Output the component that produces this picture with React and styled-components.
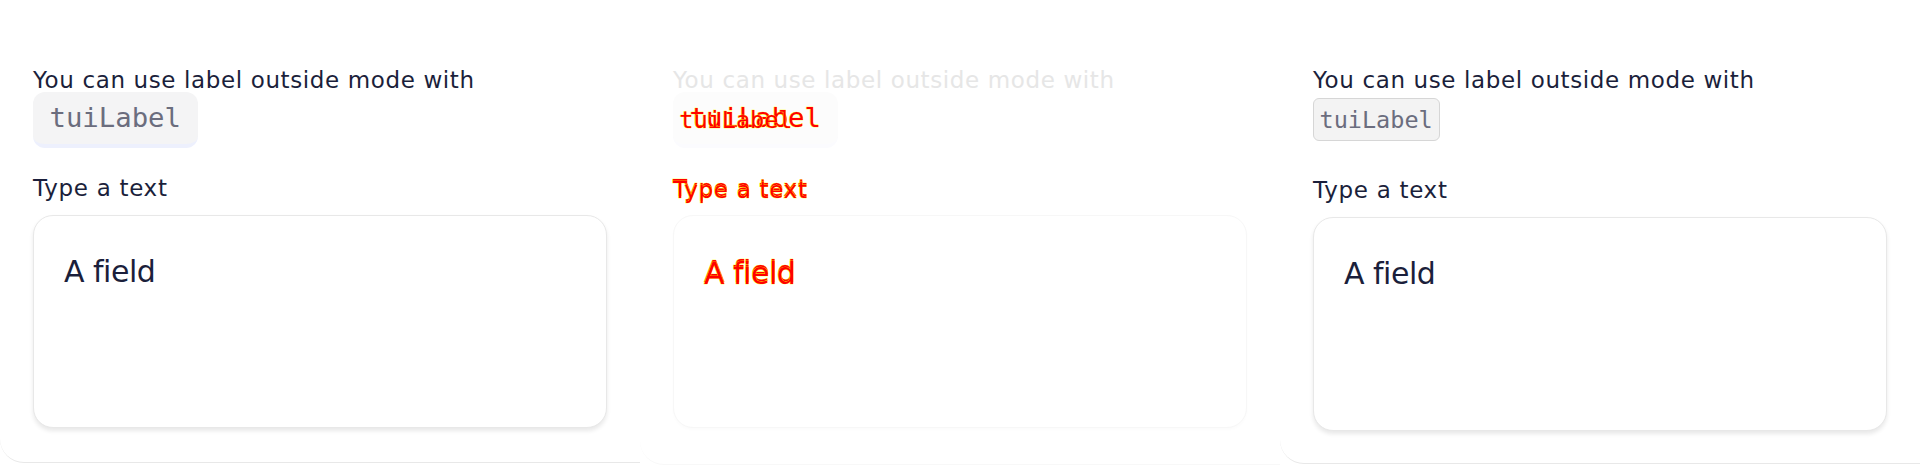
import React from "react";
import styled, { createGlobalStyle, css } from "styled-components";

const GlobalStyle = createGlobalStyle`
  html, body {
    margin: 0;
    padding: 0;
    background: #ffffff;
  }
  body {
    font-family: "DejaVu Sans", "Inter", sans-serif;
  }
`;

const INK = "#1b1f3b";
const FADED = "#e6e6e6";

const Board = styled.div`
  display: flex;
  align-items: flex-start;
  width: 1920px;
  height: 466px;
  overflow: hidden;
`;

const Panel = styled.section`
  box-sizing: border-box;
  width: 640px;
  height: ${(p) => p.$height}px;
  padding: 66px 33px 0 33px;
  display: flex;
  flex-direction: column;
  align-items: flex-start;
  background: #ffffff;
  border-bottom: 1px solid ${(p) => (p.$faded ? "#f8f8f8" : "#e8e8e8")};
  border-bottom-left-radius: 24px;
`;

const Hint = styled.div`
  font-size: 23px;
  line-height: 28px;
  letter-spacing: 0.62px;
  white-space: nowrap;
  color: ${(p) => (p.$faded ? FADED : INK)};
`;

// pixel diff look: red core, yellow anti-aliased rim
const diffInk = css`
  color: #ff0000;
  -webkit-text-stroke: 0.7px #ffff00;
  paint-order: stroke fill;
`;

const Code = styled.code`
  position: relative;
  box-sizing: border-box;
  display: inline-block;
  font-family: "DejaVu Sans Mono", "Liberation Mono", monospace;
  color: #6b6d7e;
  white-space: nowrap;
  ${(p) =>
    p.$look === "box"
      ? css`
          margin-top: 4px;
          height: 43px;
          padding: 7px 6px 6px 5.5px;
          font-size: 23.5px;
          line-height: 28px;
          background: #f3f3f3;
          border: 1px solid #d6d6d6;
          border-radius: 6px;
        `
      : css`
          margin-top: -2px;
          height: 56px;
          padding: 10px 17px 10px 16.5px;
          font-size: 27.3px;
          line-height: 32px;
          background: ${p.$faded ? "#fcfcfc" : "#f4f4f5"};
          border-bottom: 4px solid ${p.$faded ? "#fbfbfe" : "#edf0fd"};
          border-radius: 12px;
        `}
  ${(p) => p.$diff && diffInk}
`;

const CodeGhost = styled.span`
  position: absolute;
  left: 6.3px;
  top: 14px;
  font-size: 23.5px;
  line-height: 28px;
  ${diffInk}
`;

const Caption = styled.div`
  position: relative;
  margin-top: ${(p) => p.$gap}px;
  font-size: 23px;
  line-height: 28px;
  letter-spacing: 0.7px;
  color: ${INK};
  ${(p) => p.$diff && diffInk}
`;

const Ghost = styled.span`
  position: absolute;
  left: 0;
  top: ${(p) => p.$shift}px;
  white-space: nowrap;
  ${diffInk}
`;

const Field = styled.div`
  box-sizing: border-box;
  width: 574px;
  height: ${(p) => p.$height}px;
  margin-top: 13px;
  padding: 38px 30px;
  background: #ffffff;
  border: 1px solid ${(p) => (p.$faded ? "#f7f7f7" : "#e8e8e8")};
  border-radius: 20px;
  box-shadow: ${(p) =>
    p.$faded ? "0 2px 3px rgba(0, 0, 0, 0.015)" : "0 3px 4px rgba(0, 0, 0, 0.09)"};
  font-size: 30px;
  line-height: 36px;
  letter-spacing: -0.5px;
  color: ${INK};
`;

const Value = styled.span`
  position: relative;
  display: inline-block;
  white-space: nowrap;
  ${(p) => p.$diff && diffInk}
`;

const HINT = "You can use label outside mode with";

function ReferencePanel() {
  return (
    <Panel $height={463}>
      <Hint>{HINT}</Hint>
      <Code $look="pill">tuiLabel</Code>
      <Caption $gap={26}>Type a text</Caption>
      <Field $height={213}>
        <Value>A field</Value>
      </Field>
    </Panel>
  );
}

function DiffPanel() {
  return (
    <Panel $height={465} $faded>
      <Hint $faded>{HINT}</Hint>
      <Code $look="pill" $faded $diff>
        tuiLabel
        <CodeGhost>tuiLabel</CodeGhost>
      </Code>
      <Caption $gap={26} $diff>
        Type a text
        <Ghost $shift={2}>Type a text</Ghost>
      </Caption>
      <Field $height={213} $faded>
        <Value $diff>
          A field
          <Ghost $shift={2}>A field</Ghost>
        </Value>
      </Field>
    </Panel>
  );
}

function ActualPanel() {
  return (
    <Panel $height={464}>
      <Hint>{HINT}</Hint>
      <Code $look="box">tuiLabel</Code>
      <Caption $gap={35}>Type a text</Caption>
      <Field $height={214}>
        <Value>A field</Value>
      </Field>
    </Panel>
  );
}

export default function App() {
  return (
    <>
      <GlobalStyle />
      <Board>
        <ReferencePanel />
        <DiffPanel />
        <ActualPanel />
      </Board>
    </>
  );
}
